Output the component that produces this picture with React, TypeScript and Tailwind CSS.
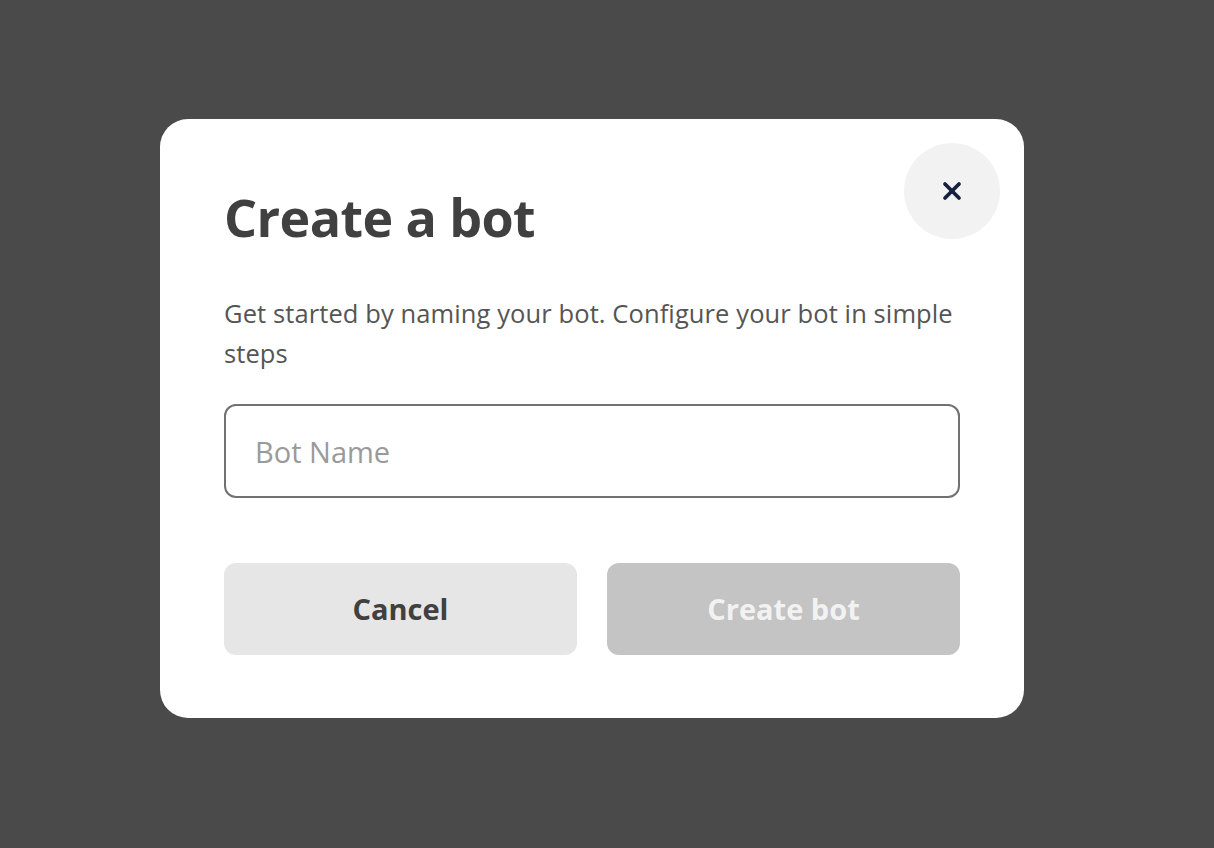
import { X } from 'lucide-react'

export default function App() {
    return (
        <div className="h-[848px] w-full bg-[#4a4a4a] pt-[119px] pl-[160px]">
            <div className="relative w-[864px] rounded-[28px] bg-white px-16 pt-[66px] pb-[63px] font-['Open_Sans',sans-serif]">
                <button className="absolute top-6 right-6 flex h-24 w-24 items-center justify-center rounded-full bg-[#f2f2f2] text-[#17203d]">
                    <X size={28} strokeWidth={3.2} />
                </button>
                <h1 className="text-[52px] leading-[64px] font-bold tracking-[-0.6px] text-[#404040]">Create a bot</h1>
                <p className="mt-[44px] text-[25.5px] leading-[40px] tracking-[0.1px] text-[#555555]">
                    Get started by naming your bot. Configure your bot in simple steps
                </p>
                <input
                    placeholder="Bot Name"
                    className="mt-[31px] h-[94px] w-full rounded-xl border-2 border-[#717171] px-[29px] text-[29px] text-[#404040] outline-none placeholder:text-[#9a9a9a]"
                />
                <div className="mt-[65px] flex gap-[30px]">
                    <button className="h-[92px] flex-1 rounded-xl bg-[#e7e6e7] text-[29px] font-bold text-[#404040]">Cancel</button>
                    <button className="h-[92px] flex-1 rounded-xl bg-[#c4c4c4] text-[29px] font-bold text-[#f2f2f2]">Create bot</button>
                </div>
            </div>
        </div>
    )
}
